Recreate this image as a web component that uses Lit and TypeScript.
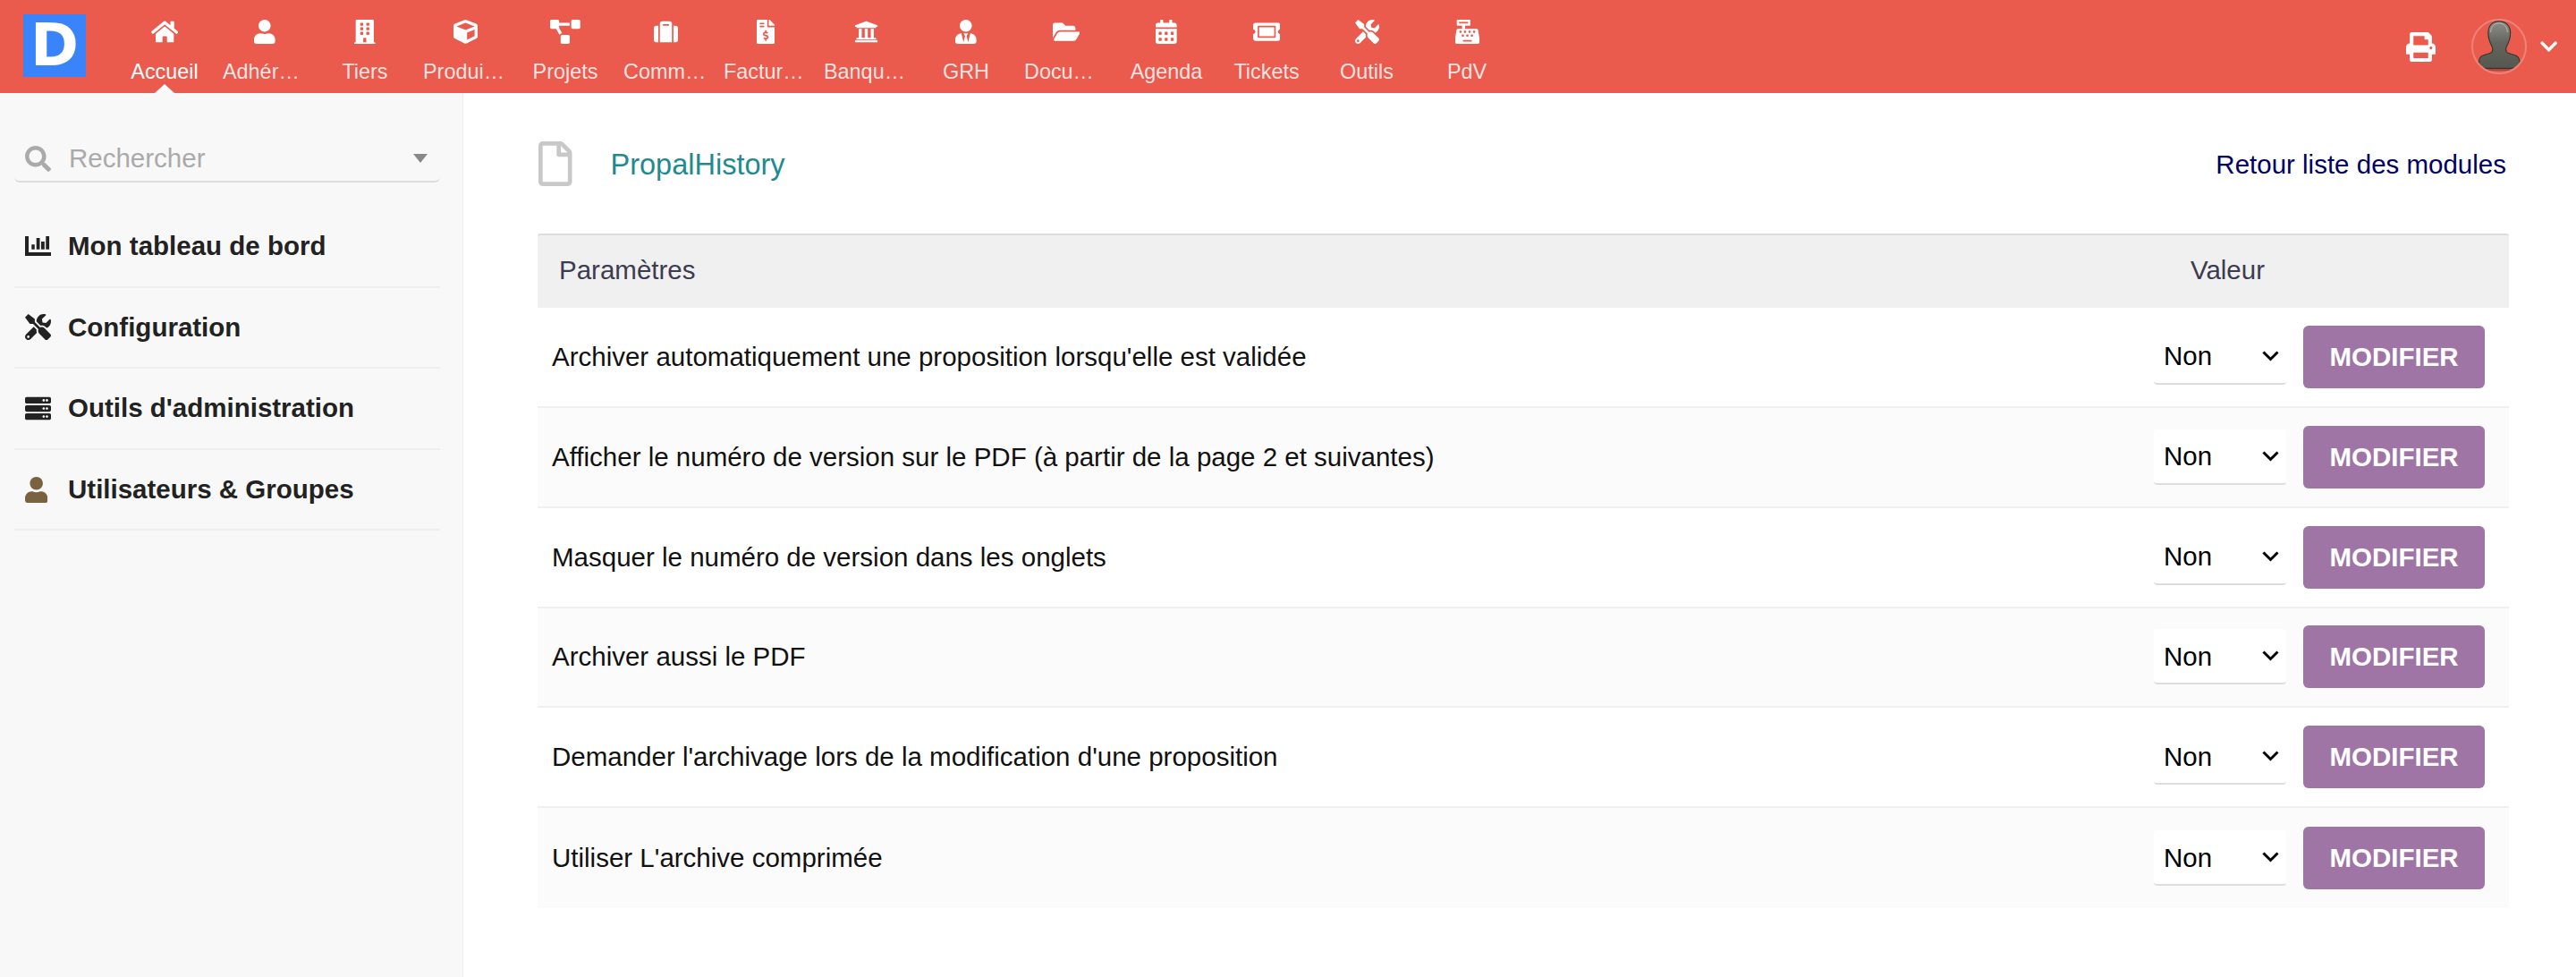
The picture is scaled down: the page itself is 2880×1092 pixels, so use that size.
import { LitElement, html, css, svg } from "lit";
import { customElement } from "lit/decorators.js";

const P: Record<string, [number, string]> = {
  home: [576, "M280.37 148.26L96 300.11V464a16 16 0 0 0 16 16l112.06-.29a16 16 0 0 0 15.92-16V368a16 16 0 0 1 16-16h64a16 16 0 0 1 16 16v95.64a16 16 0 0 0 16 16.05L464 480a16 16 0 0 0 16-16V300L295.67 148.26a12.19 12.19 0 0 0-15.3 0zM571.6 251.47L488 182.56V44.05a12 12 0 0 0-12-12h-56a12 12 0 0 0-12 12v72.61L318.47 43a48 48 0 0 0-61 0L4.34 251.47a12 12 0 0 0-1.6 16.9l25.5 31A12 12 0 0 0 45.15 301l235.22-193.74a12.19 12.19 0 0 1 15.3 0L530.9 301a12 12 0 0 0 16.9-1.6l25.5-31a12 12 0 0 0-1.7-16.93z"],
  user: [448, "M224 256c70.7 0 128-57.3 128-128S294.7 0 224 0 96 57.3 96 128s57.3 128 128 128zm89.6 32h-16.7c-22.2 10.2-46.9 16-72.9 16s-50.6-5.8-72.9-16h-16.7C60.2 288 0 348.2 0 422.4V464c0 26.5 21.5 48 48 48h352c26.5 0 48-21.5 48-48v-41.6c0-74.2-60.2-134.4-134.4-134.4z"],
  building: [448, "M436 480h-20V24c0-13.255-10.745-24-24-24H56C42.745 0 32 10.745 32 24v456H12c-6.627 0-12 5.373-12 12v20h448v-20c0-6.627-5.373-12-12-12zM128 76c0-6.627 5.373-12 12-12h40c6.627 0 12 5.373 12 12v40c0 6.627-5.373 12-12 12h-40c-6.627 0-12-5.373-12-12V76zm0 96c0-6.627 5.373-12 12-12h40c6.627 0 12 5.373 12 12v40c0 6.627-5.373 12-12 12h-40c-6.627 0-12-5.373-12-12v-40zm52 148h-40c-6.627 0-12-5.373-12-12v-40c0-6.627 5.373-12 12-12h40c6.627 0 12 5.373 12 12v40c0 6.627-5.373 12-12 12zm76 160h-64v-84c0-6.627 5.373-12 12-12h40c6.627 0 12 5.373 12 12v84zm64-172c0 6.627-5.373 12-12 12h-40c-6.627 0-12-5.373-12-12v-40c0-6.627 5.373-12 12-12h40c6.627 0 12 5.373 12 12v40zm0-96c0 6.627-5.373 12-12 12h-40c-6.627 0-12-5.373-12-12v-40c0-6.627 5.373-12 12-12h40c6.627 0 12 5.373 12 12v40zm0-96c0 6.627-5.373 12-12 12h-40c-6.627 0-12-5.373-12-12V76c0-6.627 5.373-12 12-12h40c6.627 0 12 5.373 12 12v40z"],
  cube: [512, "M239.1 6.3l-208 78c-18.7 7-31.1 25-31.1 45v225.1c0 18.2 10.3 34.8 26.5 42.9l208 104c13.5 6.8 29.4 6.8 42.9 0l208-104c16.3-8.1 26.5-24.8 26.5-42.9V129.3c0-20-12.4-37.9-31.1-44.9l-208-78C262 2.2 250 2.2 239.1 6.3zM256 68.4l192 72v1.1l-192 78-192-78v-1.1l192-72zm32 356V275.5l160-65v133.9l-160 80z"],
  diagram: [640, "M384 320H256c-17.67 0-32 14.33-32 32v128c0 17.67 14.33 32 32 32h128c17.67 0 32-14.33 32-32V352c0-17.67-14.33-32-32-32zM192 32c0-17.67-14.33-32-32-32H32C14.33 0 0 14.33 0 32v128c0 17.67 14.33 32 32 32h95.72l73.16 128.04C211.98 300.98 232.4 288 256 288h.28L192 175.51V128h224V64H192V32zM608 0H480c-17.67 0-32 14.33-32 32v128c0 17.67 14.33 32 32 32h128c17.67 0 32-14.33 32-32V32c0-17.67-14.33-32-32-32z"],
  suitcase: [512, "M128 480h256V80c0-26.5-21.5-48-48-48H176c-26.5 0-48 21.5-48 48v400zm64-384h128v32H192V96zm320 80v256c0 26.5-21.5 48-48 48h-48V128h48c26.5 0 48 21.5 48 48zM96 480H48c-26.5 0-48-21.5-48-48V176c0-26.5 21.5-48 48-48h48v352z"],
  invoice: [384, "M377 105L279.1 7c-4.5-4.5-10.6-7-17-7H256v128h128v-6.1c0-6.3-2.5-12.4-7-16.9zm-153 31V0H24C10.7 0 0 10.7 0 24v464c0 13.3 10.7 24 24 24h336c13.3 0 24-10.7 24-24V160H248c-13.2 0-24-10.8-24-24zM64 72c0-4.42 3.58-8 8-8h80c4.42 0 8 3.58 8 8v16c0 4.42-3.58 8-8 8H72c-4.42 0-8-3.58-8-8V72zm0 80v-16c0-4.42 3.58-8 8-8h80c4.42 0 8 3.58 8 8v16c0 4.42-3.58 8-8 8H72c-4.42 0-8-3.58-8-8zm144 263.88V440c0 4.42-3.58 8-8 8h-16c-4.42 0-8-3.58-8-8v-24.29c-11.29-.58-22.27-4.52-31.37-11.35-3.9-2.93-4.1-8.77-.57-12.14l11.75-11.21c2.77-2.64 6.89-2.76 10.13-.73 3.87 2.42 8.26 3.72 12.82 3.72h28.11c6.5 0 11.8-5.92 11.8-13.19 0-5.95-3.61-11.19-8.77-12.73l-45-13.5c-18.59-5.58-31.58-23.42-31.58-43.39 0-24.52 19.05-44.44 42.67-45.07V232c0-4.42 3.58-8 8-8h16c4.42 0 8 3.58 8 8v24.29c11.29.58 22.27 4.51 31.37 11.35 3.9 2.93 4.1 8.77.57 12.14l-11.75 11.21c-2.77 2.64-6.89 2.76-10.13.73-3.87-2.43-8.26-3.72-12.82-3.72h-28.11c-6.5 0-11.8 5.92-11.8 13.19 0 5.95 3.61 11.19 8.77 12.73l45 13.5c18.59 5.58 31.58 23.42 31.58 43.39 0 24.53-19.05 44.44-42.67 45.07z"],
  bank: [512, "M496 128v16a8 8 0 0 1-8 8h-24v12c0 6.627-5.373 12-12 12H60c-6.627 0-12-5.373-12-12v-12H24a8 8 0 0 1-8-8v-16a8 8 0 0 1 4.941-7.392l232-88a7.996 7.996 0 0 1 6.118 0l232 88A8 8 0 0 1 496 128zm-24 304H40c-13.255 0-24 10.745-24 24v16a8 8 0 0 0 8 8h464a8 8 0 0 0 8-8v-16c0-13.255-10.745-24-24-24zM96 192v192H60c-6.627 0-12 5.373-12 12v20h416v-20c0-6.627-5.373-12-12-12h-36V192h-64v192h-64V192h-64v192h-64V192H96z"],
  tie: [448, "M224 256c70.7 0 128-57.3 128-128S294.7 0 224 0 96 57.3 96 128s57.3 128 128 128zm95.8 32.6L272 480l-32-136 32-56h-96l32 56-32 136-47.8-191.4C56.9 292 0 350.3 0 422.4V464c0 26.5 21.5 48 48 48h352c26.5 0 48-21.5 48-48v-41.6c0-72.1-56.9-130.4-128.2-133.8z"],
  folder: [576, "M572.694 292.093L500.27 416.248A63.997 63.997 0 0 1 444.989 448H45.025c-18.523 0-30.064-20.093-20.731-36.093l72.424-124.155A64 64 0 0 1 152 256h399.964c18.523 0 30.064 20.093 20.73 36.093zM152 224h328v-48c0-26.51-21.49-48-48-48H272l-64-64H48C21.49 64 0 85.49 0 112v278.046l69.077-118.418C86.214 242.25 117.989 224 152 224z"],
  calendar: [448, "M0 464c0 26.5 21.5 48 48 48h352c26.5 0 48-21.5 48-48V192H0v272zm320-196c0-6.6 5.4-12 12-12h40c6.6 0 12 5.4 12 12v40c0 6.6-5.4 12-12 12h-40c-6.6 0-12-5.4-12-12v-40zm0 128c0-6.6 5.4-12 12-12h40c6.6 0 12 5.4 12 12v40c0 6.6-5.4 12-12 12h-40c-6.6 0-12-5.4-12-12v-40zM192 268c0-6.6 5.4-12 12-12h40c6.6 0 12 5.4 12 12v40c0 6.6-5.4 12-12 12h-40c-6.6 0-12-5.4-12-12v-40zm0 128c0-6.6 5.4-12 12-12h40c6.6 0 12 5.4 12 12v40c0 6.6-5.4 12-12 12h-40c-6.6 0-12-5.4-12-12v-40zM64 268c0-6.6 5.4-12 12-12h40c6.6 0 12 5.4 12 12v40c0 6.6-5.4 12-12 12H76c-6.6 0-12-5.4-12-12v-40zm0 128c0-6.6 5.4-12 12-12h40c6.6 0 12 5.4 12 12v40c0 6.6-5.4 12-12 12H76c-6.6 0-12-5.4-12-12v-40zM400 64h-48V16c0-8.8-7.2-16-16-16h-32c-8.8 0-16 7.2-16 16v48H160V16c0-8.8-7.2-16-16-16h-32c-8.8 0-16 7.2-16 16v48H48C21.5 64 0 85.5 0 112v48h448v-48c0-26.5-21.5-48-48-48z"],
  ticket: [576, "M128 160h320v192H128V160zm400 96c0 26.51 21.49 48 48 48v96c0 26.51-21.49 48-48 48H48c-26.51 0-48-21.49-48-48v-96c26.51 0 48-21.49 48-48s-21.49-48-48-48v-96c0-26.51 21.49-48 48-48h480c26.51 0 48 21.49 48 48v96c-26.51 0-48 21.49-48 48zm-48-104c0-13.255-10.745-24-24-24H120c-13.255 0-24 10.745-24 24v208c0 13.255 10.745 24 24 24h336c13.255 0 24-10.745 24-24V152z"],
  tools: [512, "M501.1 395.7L384 278.6c-23.1-23.1-57.6-27.6-85.4-13.9L192 158.1V96L64 0 0 64l96 128h62.1l106.6 106.6c-13.6 27.8-9.2 62.3 13.9 85.4l117.1 117.1c14.6 14.6 38.2 14.6 52.7 0l52.7-52.7c14.5-14.6 14.5-38.2 0-52.7zM331.7 225c28.3 0 54.9 11 74.9 31l19.4 19.4c15.8-6.9 30.8-16.5 43.8-29.5 37.1-37.1 49.7-89.3 37.9-136.7-2.2-9-13.5-12.1-20.1-5.5l-74.4 74.4-67.9-11.3L334 98.9l74.4-74.4c6.6-6.6 3.4-17.9-5.7-20.2-47.4-11.7-99.6.9-136.6 37.9-28.5 28.5-41.9 66.1-41.2 103.6l82.1 82.1c8.1-1.9 16.5-2.9 24.7-2.9zm-103.9 82l-56.7-56.7L18.7 402.8c-25 25-25 65.5 0 90.5s65.5 25 90.5 0l123.6-123.6c-7.6-19.9-9.9-41.6-5-62.7zM64 472c-13.2 0-24-10.8-24-24 0-13.3 10.7-24 24-24s24 10.7 24 24c0 13.2-10.7 24-24 24z"],
  register: [512, "M511.1 378.8l-26.7-160c-2.6-15.4-15.9-26.7-31.6-26.7H208v-64h96c8.8 0 16-7.2 16-16V16c0-8.8-7.2-16-16-16H48c-8.8 0-16 7.2-16 16v96c0 8.8 7.2 16 16 16h96v64H59.1c-15.6 0-29 11.3-31.6 26.7L.8 378.7c-.6 3.5-.9 7-.9 10.5V480c0 17.7 14.3 32 32 32h448c17.7 0 32-14.3 32-32v-90.7c.1-3.5-.2-7-.8-10.5zM280 248c0-8.8 7.2-16 16-16h16c8.8 0 16 7.2 16 16v16c0 8.8-7.2 16-16 16h-16c-8.8 0-16-7.2-16-16v-16zm-32 64h16c8.8 0 16 7.2 16 16v16c0 8.8-7.2 16-16 16h-16c-8.8 0-16-7.2-16-16v-16c0-8.8 7.2-16 16-16zm-32-80c8.8 0 16 7.2 16 16v16c0 8.8-7.2 16-16 16h-16c-8.8 0-16-7.2-16-16v-16c0-8.8 7.2-16 16-16h16zM80 80V48h192v32H80zm40 200h-16c-8.8 0-16-7.2-16-16v-16c0-8.8 7.2-16 16-16h16c8.8 0 16 7.2 16 16v16c0 8.8-7.2 16-16 16zm16 64v-16c0-8.8 7.2-16 16-16h16c8.8 0 16 7.2 16 16v16c0 8.8-7.2 16-16 16h-16c-8.8 0-16-7.2-16-16zm216 112c0 4.4-3.6 8-8 8H168c-4.4 0-8-3.6-8-8v-16c0-4.4 3.6-8 8-8h176c4.4 0 8 3.6 8 8v16zm24-112c0 8.8-7.2 16-16 16h-16c-8.8 0-16-7.2-16-16v-16c0-8.8 7.2-16 16-16h16c8.8 0 16 7.2 16 16v16zm48-80c0 8.8-7.2 16-16 16h-16c-8.8 0-16-7.2-16-16v-16c0-8.8 7.2-16 16-16h16c8.8 0 16 7.2 16 16v16z"],
  print: [512, "M448 192V77.25c0-8.49-3.37-16.62-9.37-22.63L393.37 9.37c-6-6-14.14-9.37-22.63-9.37H96C78.33 0 64 14.33 64 32v160c-35.35 0-64 28.65-64 64v112c0 8.84 7.16 16 16 16h48v96c0 17.67 14.33 32 32 32h320c17.67 0 32-14.33 32-32v-96h48c8.84 0 16-7.16 16-16V256c0-35.35-28.65-64-64-64zm-64 256H128v-96h256v96zm0-224H128V64h192v48c0 8.84 7.16 16 16 16h48v96zm48 72c-13.25 0-24-10.75-24-24 0-13.26 10.75-24 24-24s24 10.74 24 24c0 13.25-10.75 24-24 24z"],
  chevron: [448, "M207.029 381.476L12.686 187.132c-9.373-9.373-9.373-24.569 0-33.941l22.667-22.667c9.357-9.357 24.522-9.375 33.901-.04L224 284.505l154.745-154.021c9.379-9.335 24.544-9.317 33.901.04l22.667 22.667c9.373 9.373 9.373 24.569 0 33.941L240.971 381.476c-9.373 9.372-24.569 9.372-33.942 0z"],
  search: [512, "M505 442.7L405.3 343c-4.5-4.5-10.6-7-17-7H372c27.6-35.3 44-79.7 44-128C416 93.1 322.9 0 208 0S0 93.1 0 208s93.1 208 208 208c48.3 0 92.7-16.4 128-44v16.3c0 6.4 2.5 12.5 7 17l99.7 99.7c9.4 9.4 24.6 9.4 33.9 0l28.3-28.3c9.4-9.4 9.4-24.6.1-34zM208 336c-70.7 0-128-57.2-128-128 0-70.7 57.2-128 128-128 70.7 0 128 57.2 128 128 0 70.7-57.2 128-128 128z"],
  server: [512, "M480 160H32c-17.673 0-32-14.327-32-32V64c0-17.673 14.327-32 32-32h448c17.673 0 32 14.327 32 32v64c0 17.673-14.327 32-32 32zm-48-88c-13.255 0-24 10.745-24 24s10.745 24 24 24 24-10.745 24-24-10.745-24-24-24zm-64 0c-13.255 0-24 10.745-24 24s10.745 24 24 24 24-10.745 24-24-10.745-24-24-24zm112 248H32c-17.673 0-32-14.327-32-32v-64c0-17.673 14.327-32 32-32h448c17.673 0 32 14.327 32 32v64c0 17.673-14.327 32-32 32zm-48-88c-13.255 0-24 10.745-24 24s10.745 24 24 24 24-10.745 24-24-10.745-24-24-24zm-64 0c-13.255 0-24 10.745-24 24s10.745 24 24 24 24-10.745 24-24-10.745-24-24-24zm112 248H32c-17.673 0-32-14.327-32-32v-64c0-17.673 14.327-32 32-32h448c17.673 0 32 14.327 32 32v64c0 17.673-14.327 32-32 32zm-48-88c-13.255 0-24 10.745-24 24s10.745 24 24 24 24-10.745 24-24-10.745-24-24-24zm-64 0c-13.255 0-24 10.745-24 24s10.745 24 24 24 24-10.745 24-24-10.745-24-24-24z"],
  file: [384, "M369.9 97.9L286 14C277 5 264.8-.1 252.1-.1H48C21.5 0 0 21.5 0 48v416c0 26.5 21.5 48 48 48h288c26.5 0 48-21.5 48-48V131.9c0-12.7-5.1-25-14.1-34zM332.1 128H256V51.9l76.1 76.1zM48 464V48h160v104c0 13.3 10.7 24 24 24h104v288H48z"],
  chart: [675, "M0 0h93v419h582v93H0zM170 216h80v126h-80zM296 47h88v295h-88zM419 140h88v202h-88zM542 0h88v342h-88z"],
};

const icon = (name: string, cls = "") => {
  const [w, d] = P[name];
  return html`<svg class="ic ${cls}" viewBox="0 0 ${w} 512" fill="currentColor" aria-hidden="true">${svg`<path d=${d}></path>`}</svg>`;
};

const NAV: [string, string][] = [
  ["home", "Accueil"], ["user", "Adhérents"], ["building", "Tiers"], ["cube", "Produits | Services"],
  ["diagram", "Projets"], ["suitcase", "Commerce"], ["invoice", "Facturation"], ["bank", "Banques | Caisses"],
  ["tie", "GRH"], ["folder", "Documents"], ["calendar", "Agenda"], ["ticket", "Tickets"],
  ["tools", "Outils"], ["register", "PdV"],
];

const SIDE: [string, string, string][] = [
  ["chart", "Mon tableau de bord", "chartic"],
  ["tools", "Configuration", ""],
  ["server", "Outils d'administration", ""],
  ["user", "Utilisateurs & Groupes", "brown"],
];

const ROWS = [
  "Archiver automatiquement une proposition lorsqu'elle est validée",
  "Afficher le numéro de version sur le PDF (à partir de la page 2 et suivantes)",
  "Masquer le numéro de version dans les onglets",
  "Archiver aussi le PDF",
  "Demander l'archivage lors de la modification d'une proposition",
  "Utiliser L'archive comprimée",
];

@customElement("app-root")
export class AppRoot extends LitElement {
  static styles = css`
    :host { display: block; font-family: "Liberation Sans", Arial, sans-serif; font-size: 29.5px; color: #111; }
    * { box-sizing: border-box; }
    .page { display: flex; flex-direction: column; height: 1092px; overflow: hidden; background: #fff; }
    .ic { display: block; height: 27px; width: auto; }

    .top { flex: none; height: 104px; background: #ea5a4d; display: flex; color: #fff; }
    .logo { flex: none; width: 70px; height: 70px; margin: 16px 32px 0 26px; background: #3a84fb; color: #fff;
      font-family: "DejaVu Sans", sans-serif; font-weight: 700; font-size: 65px; line-height: 70px; text-align: center; }
    .logo span { display: block; filter: blur(.7px); }
    .nav { display: flex; flex: 1; }
    .item { position: relative; width: 112px; display: flex; flex-direction: column; align-items: center; padding-top: 22px; }
    .label { margin-top: 17px; width: 94px; font-size: 23.4px; line-height: 28px; text-align: center; white-space: nowrap;
      overflow: hidden; text-overflow: ellipsis; color: rgba(255,255,255,.85); }
    .item.on .label { color: #fff; }
    .item.on::after { content: ""; position: absolute; left: 45px; bottom: 0; border: 11px solid transparent;
      border-top: 0; border-bottom: 10px solid #fff; }
    .tools { display: flex; align-items: center; padding-right: 21px; }
    .print { height: 33px; margin-right: 40px; }
    .avatar { width: 62px; height: 62px; border-radius: 50%; border: 2px solid rgba(255,255,255,.25); overflow: hidden; margin-right: 15px; }
    .avatar svg { display: block; width: 100%; height: 100%; }
    .chev { height: 22px; }

    .body { flex: 1; display: flex; min-height: 0; }
    .side { flex: none; width: 518px; background: #f8f8f8; border-right: 1px solid #eee; padding: 26px 25px 0 16px; }
    .search { display: flex; align-items: center; height: 74px; padding: 22px 12px 0 12px; color: #aaa;
      border-bottom: 2px solid #ddd; border-radius: 0 0 6px 6px; }
    .search .ic { height: 29px; margin-right: 20px; }
    .search span { flex: 1; }
    .caret { border: 8px solid transparent; border-top: 10px solid #888; border-bottom: 0; width: 0; height: 0; margin-right: 2px; }
    .menu { margin-top: 27px; }
    .mi { height: 90.6px; display: flex; align-items: center; padding: 0 0 0 12px; border-bottom: 2px solid #eee;
      font-weight: 700; color: #222; }
    .mi .ic { height: 29px; }
    .mi .ic.chartic { height: 22px; }
    .mi .box { flex: none; width: 48px; color: #222; }
    .mi .brown { color: #7a6240; }

    .main { flex: 1; padding: 54px 75px 0 83px; }
    .head { display: flex; align-items: center; height: 50px; }
    .head .doc { height: 50px; color: #c8c8c8; margin: 0 43px 0 1px; }
    .title { flex: 1; font-size: 32.5px; color: #1f8a8f; padding-top: 2px; }
    .back { color: #000060; margin-right: 3px; padding-top: 1px; }
    .tbl { margin-top: 53px; }
    .th { height: 83px; background: #f0f0f0; border-top: 2px solid #ddd; border-radius: 3px 3px 0 0; display: flex;
      align-items: center; justify-content: space-between; padding: 0 273px 4px 24px; color: #3c3c50; }
    .row { height: 111.85px; display: flex; align-items: center; padding: 0 27px 0 16px; border-bottom: 2px solid #f0f0f0; }
    .row:nth-child(even) { background: #fbfbfb; }
    .row:last-child { border-bottom: 0; }
    .row .txt { flex: 1; }
    select { appearance: none; -webkit-appearance: none; width: 148px; height: 62px; margin-right: 19px; border: 0; border-bottom: 2px solid #ddd;
      border-radius: 4px; padding: 0 0 0 11px; font: inherit; color: #000; outline: none;
      background: #fff url("data:image/svg+xml,%3Csvg xmlns='http://www.w3.org/2000/svg' width='19' height='12' viewBox='0 0 19 12'%3E%3Cpath d='M1.5 1.5l8 8 8-8' fill='none' stroke='%23000' stroke-width='3'/%3E%3C/svg%3E") no-repeat right 8px center; }
    .btn { width: 203px; height: 70px; border: 0; border-radius: 6px; background: #9f75a6; color: #fff; font: inherit;
      font-weight: 700; padding: 0; }
  `;

  render() {
    return html`<div class="page">
      <header class="top">
        <div class="logo"><span>D</span></div>
        <nav class="nav">
          ${NAV.map(([i, l], n) => html`<div class="item ${n === 0 ? "on" : ""}">${icon(i)}<div class="label">${l}</div></div>`)}
        </nav>
        <div class="tools">
          ${icon("print", "print")}
          <div class="avatar">
            <svg viewBox="0 0 62 62">
              <defs><linearGradient id="g" x1="0" y1="0" x2="0" y2="1"><stop offset="0" stop-color="#8d8f88"/><stop offset=".45" stop-color="#63655e"/><stop offset="1" stop-color="#565850"/></linearGradient></defs>
              <rect x="12" y="56" width="38" height="4" fill="#b0453c"/>
              <path d="M31 1c9 0 13.5 6 13.5 14 0 8-3 13-5 17-1 4 0 6 3 7l9 3c3 1.500 4 4 4 8v7H7v-7c0-4 1-6.500 4-8l9-3c3-1 4-3 3-7-2-4-5-9-5-17C18 7 22 1 31 1z" fill="url(#g)" stroke="#333630" stroke-width="1.200"/>
              <path d="M21 14c0-6 4-11 10-11s10 5 10 11" fill="none" stroke="#b9bbb4" stroke-width="1"/>
            </svg>
          </div>
          ${icon("chevron", "chev")}
        </div>
      </header>
      <div class="body">
        <aside class="side">
          <div class="search">${icon("search")}<span>Rechercher</span><i class="caret"></i></div>
          <div class="menu">
            ${SIDE.map(([i, l, c]) => html`<div class="mi"><div class="box">${icon(i, c)}</div>${l}</div>`)}
          </div>
        </aside>
        <main class="main">
          <div class="head">
            ${icon("file", "doc")}
            <div class="title">PropalHistory</div>
            <div class="back">Retour liste des modules</div>
          </div>
          <div class="tbl">
            <div class="th"><span>Paramètres</span><span>Valeur</span></div>
            <div class="rows">
              ${ROWS.map((r) => html`<div class="row"><div class="txt">${r}</div>
                <select><option>Non</option><option>Oui</option></select>
                <button class="btn">MODIFIER</button></div>`)}
            </div>
          </div>
        </main>
      </div>
    </div>`;
  }
}
